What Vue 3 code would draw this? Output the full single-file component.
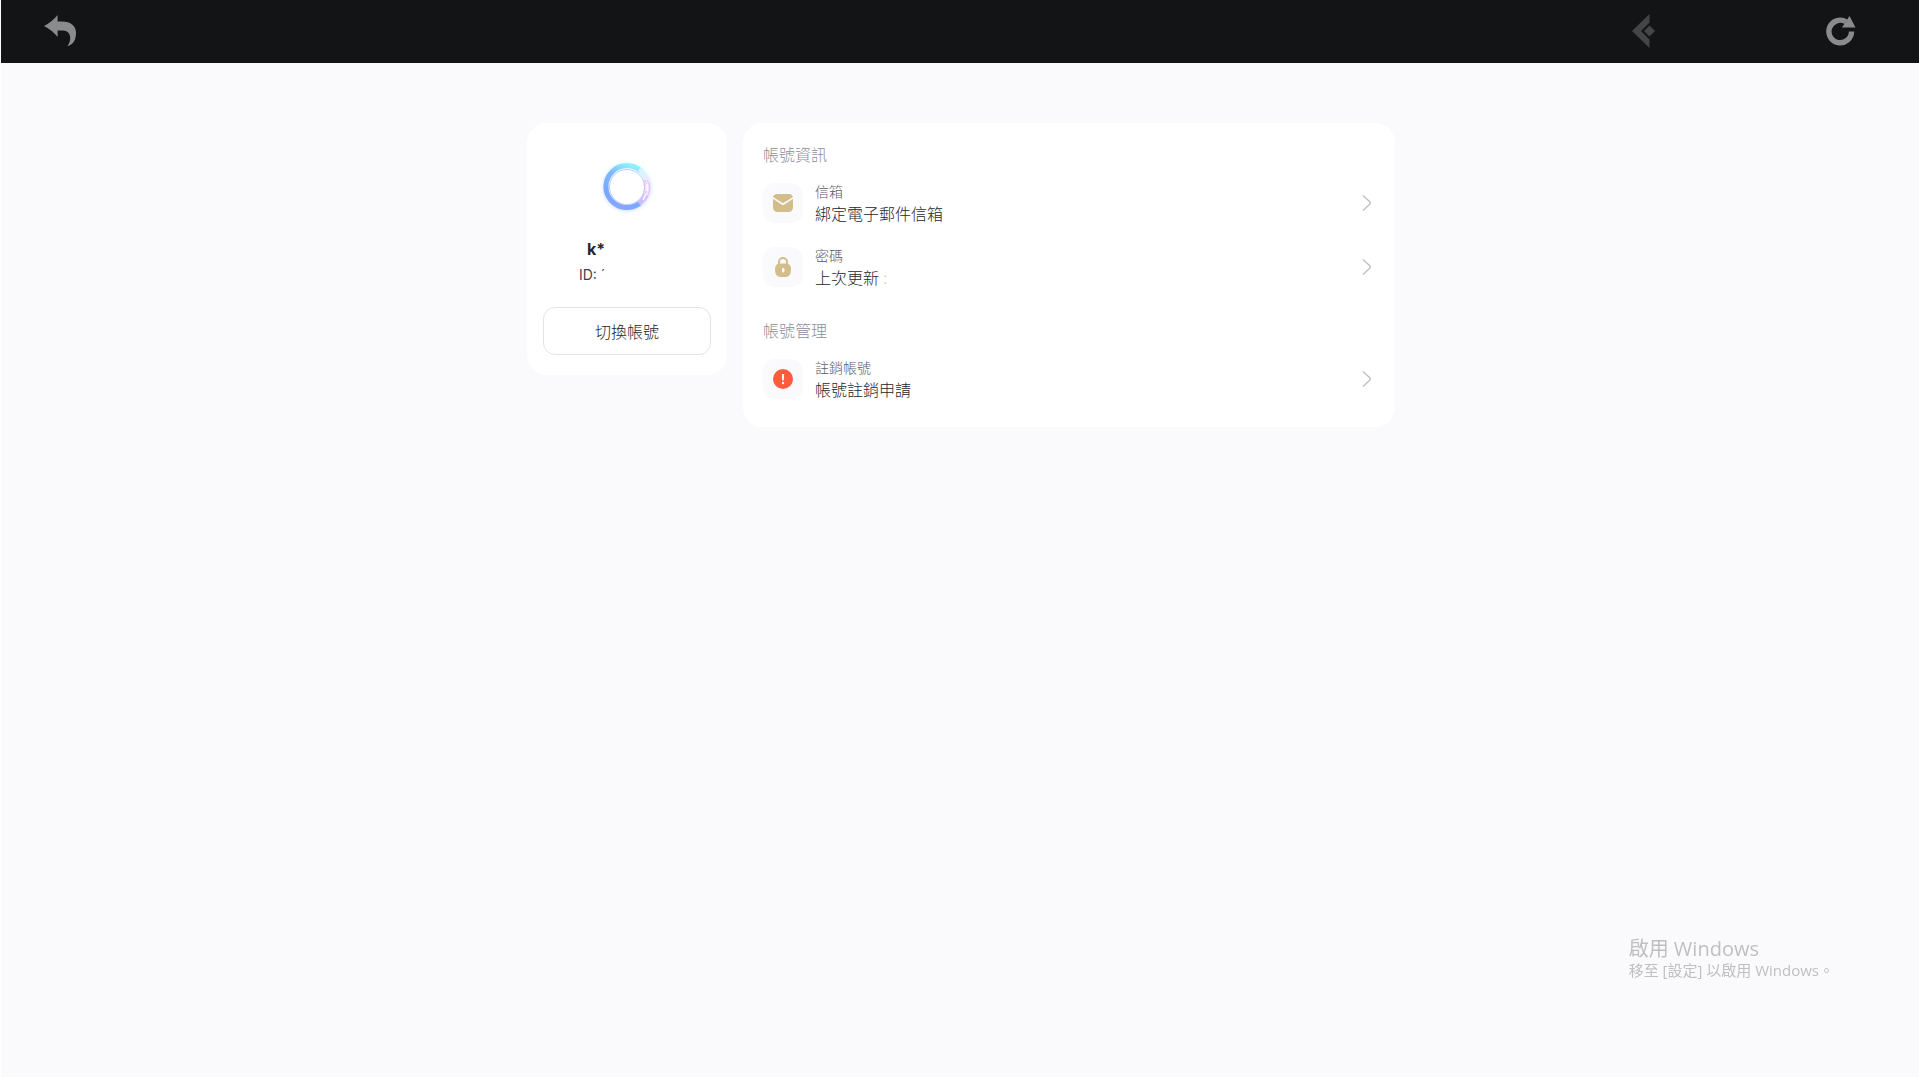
<template>
  <div class="page">
    <header class="topbar">
      <button class="nav-btn" type="button" aria-label="返回">
        <svg width="32" height="32" viewBox="0 0 32 32">
          <path d="M0 11 Q8 7 13.600 0 V6.500 H18 C27 6.500 32 11 32 18 C32 25 29 30 23.500 31 C27.500 26 28 16 19 15.500 H13.600 V22 Q8 15 0 11 Z" fill="#8a8b8d" />
        </svg>
      </button>
      <div class="topbar-right">
        <button class="nav-btn" type="button" aria-label="首頁">
          <svg width="24" height="34" viewBox="0 0 24 34">
            <path d="M17.500 0 V8.500 L9 17 L17.500 25.500 V34 L0 17 Z" fill="#444547" />
            <path d="M17.500 11.500 L23 17 L17.500 22.500 L12 17 Z" fill="#444547" />
          </svg>
        </button>
        <button class="nav-btn" type="button" aria-label="重新整理">
          <svg width="30" height="30" viewBox="0 0 30 30">
            <path d="M25.500 15.500 A11.300 11.300 0 1 1 20 5.800" fill="none" stroke="#8a8b8d" stroke-width="5.400" />
            <path d="M23.500 0 L29.500 11.500 H16 Z" fill="#8a8b8d" />
          </svg>
        </button>
      </div>
    </header>

    <main class="content">
      <aside class="card profile">
        <svg class="avatar" width="64" height="64" viewBox="0 0 64 64">
          <defs>
            <linearGradient id="ring" x1="0.700" y1="0" x2="0.400" y2="1">
              <stop offset="0" stop-color="#8ef0fb" />
              <stop offset="0.300" stop-color="#7db8ff" />
              <stop offset="0.750" stop-color="#76a8ff" />
              <stop offset="1" stop-color="#86a6ff" />
            </linearGradient>
            <filter id="glow" x="-30%" y="-30%" width="160%" height="160%">
              <feGaussianBlur stdDeviation="2" />
            </filter>
          </defs>
          <circle cx="32" cy="32" r="21" fill="none" stroke="url(#ring)" stroke-width="5" opacity="0.450" filter="url(#glow)" />
          <circle cx="32" cy="32" r="18" fill="#fff" />
          <path d="M46 16 A21 21 0 1 0 45 48" fill="none" stroke="url(#ring)" stroke-width="5" />
          <path d="M44 14.500 A21 21 0 0 1 52 26" fill="none" stroke="#d9f4fd" stroke-width="4" />
          <path d="M51 23 A21 21 0 0 1 51 41" fill="none" stroke="#f5e2fb" stroke-width="5" />
          <path d="M51 40 A21 21 0 0 1 44 48.500" fill="none" stroke="#cdbcfb" stroke-width="5" />
          <circle cx="32" cy="32" r="17.500" fill="none" stroke="#bccbfa" stroke-width="1" />
          <path d="M49 26 Q53 25 54.500 29 Q56 39 49 47 Q47 46 50 41 Q53 35 51 28 M49 27 Q51 33 48 41" fill="none" stroke="#dfc3f4" stroke-width="1" />
          <path d="M52 29 V36 M51 39 L48 45" fill="none" stroke="#fff" stroke-width="1.500" />
        </svg>
        <div class="name">k*</div>
        <div class="uid">ID: ´</div>
        <button class="switch-btn" type="button">切換帳號</button>
      </aside>

      <div class="card panel">
        <section v-for="group in groups" :key="group.title" class="group">
          <h2 class="group-title">{{ group.title }}</h2>
          <button v-for="item in group.items" :key="item.icon" class="row" type="button">
            <span class="row-icon">
              <svg v-if="item.icon === 'mail'" width="20" height="20" viewBox="0 0 20 20">
                <path d="M4 1 H16 Q19 1 20 4 L10 10.300 L0 4 Q1 1 4 1 Z" fill="#d3bd8b" />
                <path d="M0 5.800 L8.500 11.400 Q10 12.400 11.500 11.400 L20 5.800 V14 Q20 19 15 19 H5 Q0 19 0 14 Z" fill="#d3bd8b" />
              </svg>
              <svg v-else-if="item.icon === 'lock'" width="20" height="20" viewBox="0 0 20 20">
                <path d="M6 7.500 V5 A4 4 0 0 1 14 5 V7.500" fill="none" stroke="#d3bd8b" stroke-width="2" />
                <path d="M6.500 6.500 H13.500 Q18 7 18 12 Q18 20 12.500 20 H7.500 Q2 20 2 12 Q2 7 6.500 6.500 Z" fill="#d3bd8b" />
                <rect x="9" y="11" width="2.400" height="4.500" rx="1.200" fill="#fff" />
              </svg>
              <svg v-else width="20" height="20" viewBox="0 0 20 20">
                <circle cx="10" cy="10" r="10" fill="#fc5b3e" />
                <path d="M8.900 5 H11.100 L10.800 11.500 H9.200 Z" fill="#fff" />
                <circle cx="10" cy="14" r="1.200" fill="#fff" />
              </svg>
            </span>
            <span class="row-text">
              <span class="label">{{ item.label }}</span>
              <span class="value">{{ item.value }}<span v-if="item.suffix" class="suffix">{{ item.suffix }}</span></span>
            </span>
            <svg class="arrow" width="10" height="18" viewBox="0 0 10 18">
              <path d="M1 1.500 L7.500 7.500 Q9 9 7.500 10.500 L1 16.500" fill="none" stroke="#bdbdc5" stroke-width="1.300" />
            </svg>
          </button>
        </section>
      </div>
    </main>

    <div class="watermark">
      <div class="wm-title">啟用 Windows</div>
      <div class="wm-text">移至 [設定] 以啟用 Windows。</div>
    </div>
  </div>
</template>

<script setup>
const groups = [
  {
    title: '帳號資訊',
    items: [
      { icon: 'mail', label: '信箱', value: '綁定電子郵件信箱' },
      { icon: 'lock', label: '密碼', value: '上次更新', suffix: ':' },
    ],
  },
  {
    title: '帳號管理',
    items: [{ icon: 'alert', label: '註銷帳號', value: '帳號註銷申請' }],
  },
];
</script>

<style>
body {
  background: #fff;
}
</style>

<style scoped>
.page {
  box-sizing: border-box;
  min-height: calc(100vh - 2px);
  margin-left: 1px;
  background: #fafafc;
  font-family: Inter, "Noto Sans CJK TC", sans-serif;
  font-weight: 300;
  color: #26262b;
}

button {
  padding: 0;
  border: none;
  background: none;
  font: inherit;
  color: inherit;
  cursor: pointer;
}

.topbar {
  box-sizing: border-box;
  display: flex;
  align-items: center;
  justify-content: space-between;
  height: 63px;
  padding: 0 54px 2px 35px;
  background: #131416;
}

.topbar-right { display: flex; gap: 149px; }

.nav-btn {
  display: flex;
  align-items: center;
  justify-content: center;
  width: 48px;
  height: 48px;
}

.content {
  display: flex;
  justify-content: center;
  align-items: flex-start;
  gap: 16px;
  padding: 60px 0 0 2px;
}

.card { box-sizing: border-box; background: #fff; border-radius: 20px; }

.profile {
  display: flex;
  flex-direction: column;
  width: 200px;
  padding: 32px 16px 20px;
}

.avatar { align-self: center; margin-bottom: 18px; }

.name {
  margin-left: 44px;
  font-size: 16px;
  line-height: 24px;
  font-weight: 700;
}

.uid {
  margin: 4px 0 22px 36px;
  font-size: 14px;
  line-height: 20px;
  font-weight: 400;
  color: #44444a;
}

.switch-btn {
  height: 48px;
  border: 1px solid #e4e4e8;
  border-radius: 12px;
  font-size: 16px;
}

.panel { width: 652px; padding: 20px 20px 16px; }

.group + .group { margin-top: 20px; }

.group-title {
  margin: 0 0 4px;
  font-size: 16px;
  line-height: 24px;
  font-weight: 300;
  color: #8e8e9a;
}

.row {
  display: flex;
  align-items: center;
  width: 100%;
  height: 64px;
  text-align: left;
}

.row-icon {
  display: flex;
  align-items: center;
  justify-content: center;
  width: 40px;
  height: 40px;
  margin-right: 12px;
  border-radius: 12px;
  background: #fafafc;
}

.row-text { flex: 1; padding-top: 2px; }
.label, .value { display: block; }
.label { font-size: 14px; line-height: 20px; color: #5c5c66; }
.value { font-size: 16px; line-height: 24px; }
.suffix { margin-left: 4px; color: #d8cfae; }
.arrow { margin-right: 3px; }

.watermark {
  position: fixed;
  right: 85px;
  bottom: 99px;
  font-family: "Open Sans", "Noto Sans CJK TC", sans-serif;
  font-weight: 400;
  color: #bfbfc1;
}

.wm-title { font-size: 20px; line-height: 22px; }
.wm-text { font-size: 15px; line-height: 20px; }
</style>
